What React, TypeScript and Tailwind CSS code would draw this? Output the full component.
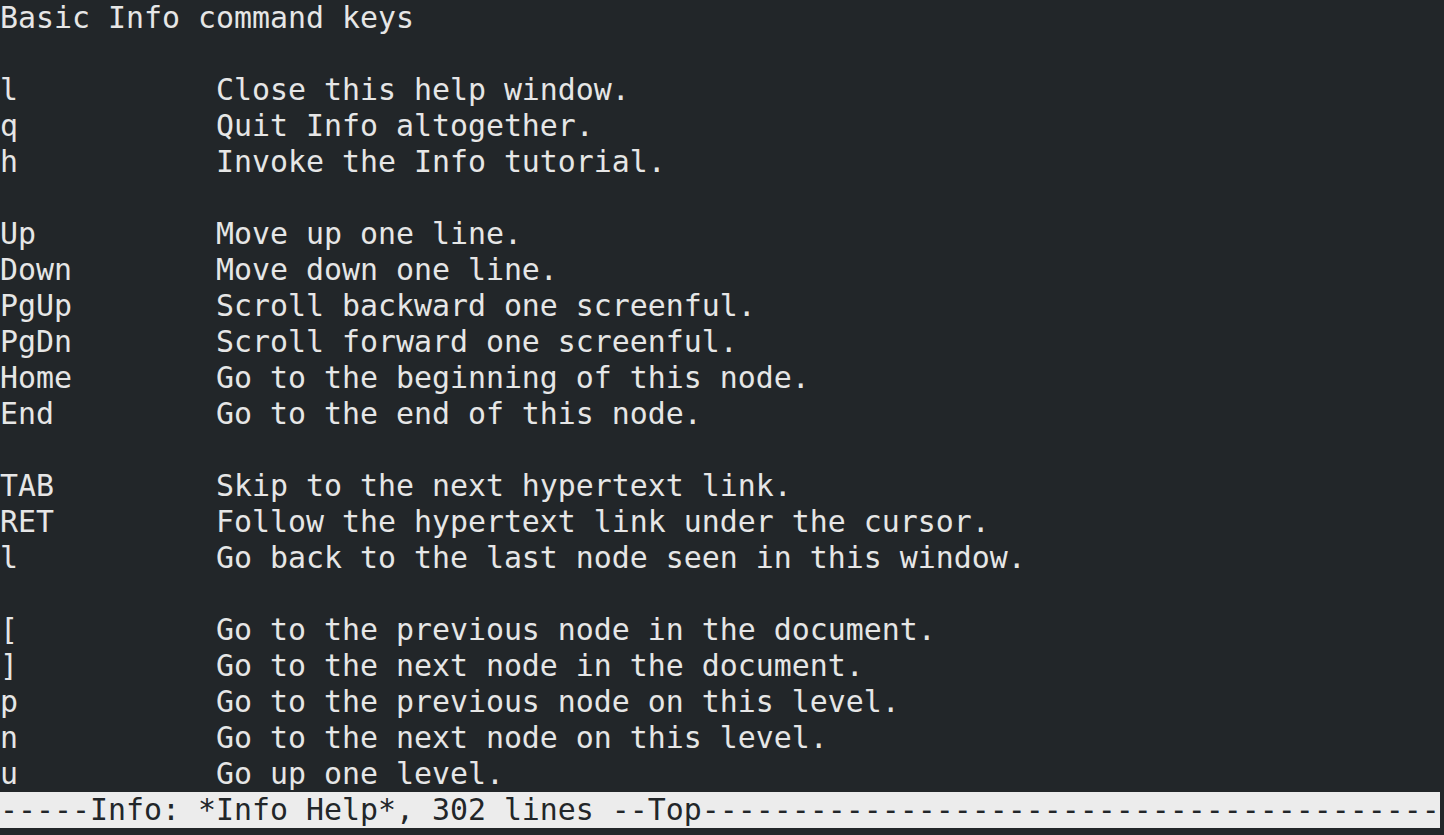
const lines: string[] = [
  "Basic Info command keys",
  "",
  "l           Close this help window.",
  "q           Quit Info altogether.",
  "h           Invoke the Info tutorial.",
  "",
  "Up          Move up one line.",
  "Down        Move down one line.",
  "PgUp        Scroll backward one screenful.",
  "PgDn        Scroll forward one screenful.",
  "Home        Go to the beginning of this node.",
  "End         Go to the end of this node.",
  "",
  "TAB         Skip to the next hypertext link.",
  "RET         Follow the hypertext link under the cursor.",
  "l           Go back to the last node seen in this window.",
  "",
  "[           Go to the previous node in the document.",
  "]           Go to the next node in the document.",
  "p           Go to the previous node on this level.",
  "n           Go to the next node on this level.",
  "u           Go up one level.",
];

const status = "-----Info: *Info Help*, 302 lines --Top" + "-".repeat(41);

export default function App() {
  return (
    <div
      className="w-[1444px] h-[835px] overflow-hidden bg-[#222629] text-[#e6e6e6] text-[29.9px] leading-[36px]"
      style={{ fontFamily: '"DejaVu Sans Mono", monospace' }}
    >
      <div className="flex flex-col">
        {lines.map((l, i) => (
          <div key={i} className="h-[36px] whitespace-pre">
            {l}
          </div>
        ))}
        <div className="h-[36px] w-[1440px] whitespace-pre bg-[#ececec] text-[#222629]">
          {status}
        </div>
      </div>
    </div>
  );
}
